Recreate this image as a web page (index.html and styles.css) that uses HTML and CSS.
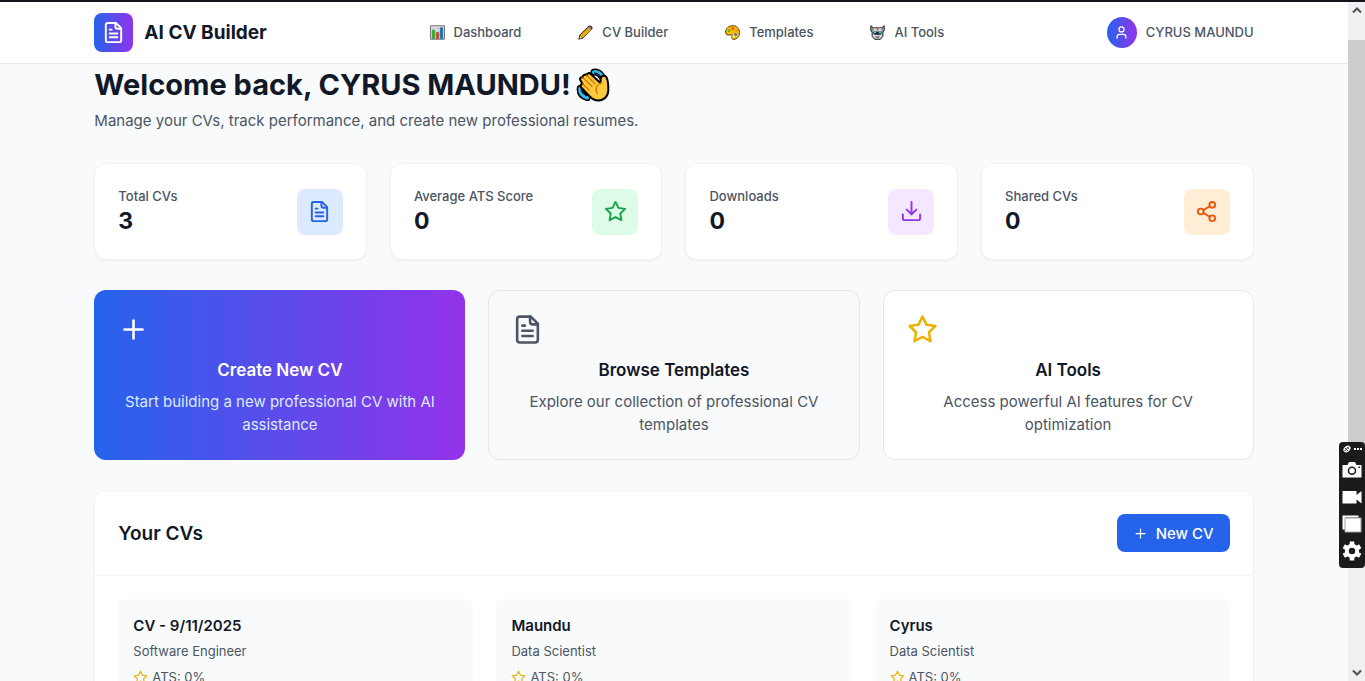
FILE: index.html
```html
<!DOCTYPE html>
<html lang="en">
<head>
<meta charset="utf-8">
<title>AI CV Builder</title>
<link rel="stylesheet" href="styles.css">
</head>
<body>
<svg class="sprite" aria-hidden="true">
  <symbol id="doc" viewBox="0 0 24 24"><path d="M14.5 2H6a2 2 0 0 0-2 2v16a2 2 0 0 0 2 2h12a2 2 0 0 0 2-2V7.5L14.5 2z"/><path d="M14 2v4a2 2 0 0 0 2 2h4M10 9H8M16 13H8M16 17H8"/></symbol>
  <symbol id="star" viewBox="0 0 24 24"><path d="M12 2l3.09 6.26L22 9.27l-5 4.87 1.18 6.88L12 17.77l-6.18 3.25L7 14.14 2 9.27l6.91-1.01L12 2z"/></symbol>
  <symbol id="download" viewBox="0 0 24 24"><path d="M21 15v4a2 2 0 0 1-2 2H5a2 2 0 0 1-2-2v-4M7 10l5 5 5-5M12 15V2"/></symbol>
  <symbol id="share" viewBox="0 0 24 24"><circle cx="18" cy="5" r="3"/><circle cx="6" cy="12" r="3"/><circle cx="18" cy="19" r="3"/><path d="M8.59 13.51l6.83 3.98M15.41 6.51l-6.82 3.98"/></symbol>
  <symbol id="plus" viewBox="0 0 24 24"><path d="M5 12h14M12 5v14"/></symbol>
  <symbol id="user" viewBox="0 0 24 24"><path d="M19 21v-2a4 4 0 0 0-4-4H9a4 4 0 0 0-4 4v2"/><circle cx="12" cy="7" r="4"/></symbol>
</svg>
<div class="window">
  <div class="page">
    <header class="topbar">
      <div class="container topbar-inner">
        <a class="brand" href="#"><span class="brand-mark"><svg class="icon icon-md"><use href="#doc"/></svg></span>AI CV Builder</a>
        <nav class="nav">
          <a href="#"><svg class="emoji" viewBox="0 0 16 16"><path fill="#d9dde0" stroke="#6b6f73" d="M.5.8h15v14.4H.5z"/><path stroke="#b3b8bc" stroke-width=".6" d="M1 4h14M1 7.500h14M1 11h14"/><path fill="#16c60c" stroke="#1a7a14" stroke-width=".5" d="M2.500 5.500h2.500V14.500H2.500z"/><path fill="#f03a17" stroke="#a02a18" stroke-width=".5" d="M6.800 8h2.500v6.500H6.800z"/><path fill="#0078d7" stroke="#0b4f8a" stroke-width=".5" d="M11 3h2.500v11.500H11z"/></svg>Dashboard</a>
          <a href="#"><svg class="emoji" viewBox="0 0 16 16"><path fill="#222" d="M.3 15.700l1.200-5L11.500.9Q13-.2 14.600 1.200q1.600 1.600.5 3L5.200 14.300z"/><path fill="#ffb900" d="M2.500 11L10.800 2.800l2.500 2.500L5 13.500z"/><path fill="#f7d7ac" d="M2.200 11.500l2.300 2.200-2.800.9z"/><path fill="#c4cbd0" d="M10.800 2.600l.8-.8 2.600 2.600-.8.800z"/><path fill="#e74856" d="M12 1.600q1-.8 2 .2t.3 2.200z"/><path stroke="#e08a00" stroke-width=".7" d="M3.600 12.400l8.400-8.300"/></svg>CV Builder</a>
          <a href="#"><svg class="emoji" viewBox="0 0 16 16"><path fill="#ffb900" stroke="#4b3710" d="M8 .7C12.500.5 15.500 3.800 15.500 8c0 4.300-3 7.200-6 7.300-2.800 0-2.600-2.100-2-3.300.6-1.400-.5-2-2-1.500C3 11.300.6 10.400.6 7.700.7 3.500 4 .9 8 .7z"/><circle cx="8.200" cy="3.700" r="1.300" fill="#f03a17"/><circle cx="4.500" cy="6" r="1.300" fill="#16c60c"/><circle cx="12.200" cy="6" r="1.100" fill="#e08a00"/><circle cx="11.300" cy="10" r="1.500" fill="#3b78ff"/><circle cx="9" cy="12.500" r="1.200" fill="#fff3c9"/></svg>Templates</a>
          <a href="#"><svg class="emoji" viewBox="0 0 16 16"><path fill="#8b9297" stroke="#222" d="M.8.8L3.700 3h8.600L15.200.8v5L13.800 8v4L11 15.300H5L2.200 12V8L.8 5.800z"/><path fill="#cfd4d8" d="M4 3.500h8l1 8.500-2.500 2.500h-5L3 12z"/><path fill="#1d1d1d" d="M3.500 7h9v2l-1.500 1.500H5L3.500 9z"/><path fill="#31d2f7" d="M4 7h2.600v1.800H4zM9.400 7H12v1.800H9.400z"/><path fill="#f03a17" d="M7.200 2.500h1.600v3H7.200z"/><path fill="#333" d="M6 12.300h4v1H6z"/></svg>AI Tools</a>
        </nav>
        <a class="account" href="#"><span class="avatar"><svg class="icon icon-sm"><use href="#user"/></svg></span>CYRUS MAUNDU</a>
      </div>
    </header>
    <main class="container">
      <h1>Welcome back, CYRUS MAUNDU! <svg class="wave" viewBox="0 0 34 34"><path fill="none" stroke="#000" stroke-width="7" stroke-linecap="round" d="M18 4.200q5-.8 8.500 5.200M4.200 20.500q-.5 7 7 9"/><path fill="none" stroke="#31b8ea" stroke-width="4" stroke-linecap="round" d="M18 4.200q5-.8 8.500 5.200M4.200 20.500q-.5 7 7 9"/><path fill="none" stroke="#000" stroke-width="1.200" d="M18 5q5 0 7.500 5.500M5.200 20q0 5 6 8"/><path fill="#ffc83d" stroke="#000" stroke-width="2" stroke-linejoin="round" d="M4.500 12.500c-1.500-2 .3-4 2.300-3C6.500 7 9 5.800 10.500 7.300c.3-2.300 3-2.800 4.300-1.300l9.500 9c.4-2.300.2-4.500 1-6 1-1.800 4-1.700 5 0 1.500 2.800 2.200 8 2 13.500-.2 6-4.500 10-10 10-4 0-6.300-1.700-8.300-3.700L5.200 19.500c-1.600-1.700-.2-3.800 1.600-3.300z"/><path fill="none" stroke="#d67d00" stroke-width="1.400" stroke-linecap="round" d="M6.800 9.500l9.200 9M10.500 7.300l8.500 8.500M6.800 16l6.500 6.200M24.300 15c-3.800 2.500-5.200 6.500-3 10.500"/></svg></h1>
      <p class="lead">Manage your CVs, track performance, and create new professional resumes.</p>

      <section class="stats">
        <article class="card stat"><div><p class="stat-label">Total CVs</p><p class="stat-value">3</p></div><span class="tile blue"><svg class="icon icon-md"><use href="#doc"/></svg></span></article>
        <article class="card stat"><div><p class="stat-label">Average ATS Score</p><p class="stat-value">0</p></div><span class="tile green"><svg class="icon icon-md"><use href="#star"/></svg></span></article>
        <article class="card stat"><div><p class="stat-label">Downloads</p><p class="stat-value">0</p></div><span class="tile purple"><svg class="icon icon-md"><use href="#download"/></svg></span></article>
        <article class="card stat"><div><p class="stat-label">Shared CVs</p><p class="stat-value">0</p></div><span class="tile orange"><svg class="icon icon-md"><use href="#share"/></svg></span></article>
      </section>

      <section class="actions">
        <button class="action primary" type="button"><svg class="icon icon-lg"><use href="#plus"/></svg><span class="action-title">Create New CV</span><span class="action-text">Start building a new professional CV with AI assistance</span></button>
        <button class="action plain" type="button"><svg class="icon icon-lg"><use href="#doc"/></svg><span class="action-title">Browse Templates</span><span class="action-text">Explore our collection of professional CV templates</span></button>
        <button class="action white" type="button"><svg class="icon icon-lg gold"><use href="#star"/></svg><span class="action-title">AI Tools</span><span class="action-text">Access powerful AI features for CV optimization</span></button>
      </section>

      <section class="card panel">
        <div class="panel-head">
          <h2>Your CVs</h2>
          <button class="new-cv" type="button"><svg class="icon icon-sm"><use href="#plus"/></svg>New CV</button>
        </div>
        <div class="cv-list">
          <article class="cv"><h3>CV - 9/11/2025</h3><p>Software Engineer</p><p class="ats"><svg class="icon icon-sm gold"><use href="#star"/></svg>ATS: 0%</p></article>
          <article class="cv"><h3>Maundu</h3><p>Data Scientist</p><p class="ats"><svg class="icon icon-sm gold"><use href="#star"/></svg>ATS: 0%</p></article>
          <article class="cv"><h3>Cyrus</h3><p>Data Scientist</p><p class="ats"><svg class="icon icon-sm gold"><use href="#star"/></svg>ATS: 0%</p></article>
        </div>
      </section>
    </main>
  </div>
  <div class="scrollbar" aria-hidden="true">
    <svg class="arrow" viewBox="0 0 10 8"><path d="M1 6.500l4-4 4 4"/></svg>
    <div class="track"><div class="thumb"></div></div>
    <svg class="arrow" viewBox="0 0 10 8"><path d="M1 1.500l4 4 4-4"/></svg>
  </div>
  <aside class="recorder">
    <svg class="grip" viewBox="0 0 20 8"><ellipse cx="5" cy="4" rx="4" ry="2.800" transform="rotate(-40 5 4)" fill="#fff"/><path stroke="#1b1b1b" stroke-width=".8" fill="none" d="M2 6.500l5-5M3 3l3 3M5 2l2 2"/><path fill="#fff" d="M12 3h2v2h-2zM15 3h2v2h-2zM18 3h2v2h-2z"/></svg>
    <button type="button" aria-label="Take screenshot"><svg viewBox="0 0 20 20"><path fill="#fff" d="M.5 5h5L7 2h6l1.500 3h5v12.500H.5z"/><circle cx="10" cy="10.800" r="3.500" fill="none" stroke="#1b1b1b" stroke-width="1.500"/><path fill="#1b1b1b" d="M16.500 6.500h1.500v1.500h-1.500z"/></svg></button>
    <button type="button" aria-label="Record video"><svg viewBox="0 0 20 20"><path fill="#fff" d="M.5 4h14v4l5-4v12.500l-5-4v4H.5z"/></svg></button>
    <button type="button" aria-label="Gallery"><svg viewBox="0 0 20 20"><path fill="#fff" d="M.5 1.500h16v2H3.500v12h-3z"/><path fill="#fff" stroke="#a5a5a5" d="M3 4h16v14H3z"/></svg></button>
    <button type="button" aria-label="Settings"><svg viewBox="0 0 20 20"><path fill="none" stroke="#fff" stroke-width="4.600" d="M10 .5v4M10 15.500v4M1.800 5.300l3.400 2M14.800 12.700l3.400 2M1.800 14.700l3.400-2M14.800 7.300l3.400-2"/><circle cx="10" cy="10" r="5.200" fill="none" stroke="#fff" stroke-width="4"/></svg></button>
  </aside>
</div>
</body>
</html>
```
FILE: styles.css
```css
* { box-sizing: border-box; }
body, h1, h2, h3, p { margin: 0; }
body {
  font-family: Inter, "Open Sans", sans-serif;
  font-size: 15px;
  line-height: 23px;
  color: #111827;
  background: #f9fafb;
}
a { color: inherit; text-decoration: none; }
button { font: inherit; color: inherit; border: 0; cursor: pointer; }
.sprite { position: absolute; width: 0; height: 0; }

.window {
  position: relative;
  display: flex;
  height: 100vh;
  border-top: 2px solid #15121c;
  overflow: hidden;
}
.page { flex: 1; overflow: hidden; }
.container { width: 86%; max-width: 1160px; margin: 0 auto; }

.icon {
  display: block;
  flex: none;
  fill: none;
  stroke: currentColor;
  stroke-width: 2;
  stroke-linecap: round;
  stroke-linejoin: round;
}
.icon-sm { width: 15px; height: 15px; }
.icon-md { width: 23px; height: 23px; }
.icon-lg { width: 31px; height: 31px; }
.gold { color: #eab308; }

.topbar { background: #fff; border-bottom: 1px solid #e5e7eb; }
.topbar-inner {
  display: flex;
  align-items: center;
  justify-content: space-between;
  height: 61px;
}
.brand { display: flex; align-items: center; gap: 11px; font-size: 19px; font-weight: 700; }
.brand-mark {
  display: grid;
  place-items: center;
  width: 39px;
  height: 39px;
  border-radius: 8px;
  color: #fff;
  background: linear-gradient(90deg, #2563eb, #9333ea);
}
.nav { display: flex; gap: 57px; }
.nav a { display: flex; align-items: center; gap: 9px; }
.nav, .account { font-size: 13px; font-weight: 500; color: #4b5563; }
.emoji { width: 15px; height: 15px; fill: none; }
.account { display: flex; align-items: center; gap: 9px; }
.avatar {
  display: grid;
  place-items: center;
  width: 30px;
  height: 31px;
  border-radius: 50%;
  color: #fff;
  background: linear-gradient(90deg, #2563eb, #9333ea);
}

main { padding-top: 3px; }
h1 { display: flex; align-items: center; gap: 5px; font-size: 29px; line-height: 35px; font-weight: 700; }
.wave { width: 34px; height: 34px; }
.lead { margin-top: 7px; color: #4b5563; }

.card {
  background: #fff;
  border: 1px solid #f3f4f6;
  border-radius: 12px;
  box-shadow: 0 1px 2px rgba(0, 0, 0, 0.06);
}
.stats { display: grid; grid-template-columns: repeat(4, 1fr); gap: 23px; margin-top: 31px; }
.stat { display: flex; align-items: center; justify-content: space-between; padding: 23px; }
.stat-label { font-size: 13px; line-height: 19px; font-weight: 500; color: #4b5563; }
.stat-value { font-size: 23px; line-height: 30px; font-weight: 700; }
.tile { display: grid; place-items: center; width: 46px; height: 46px; border-radius: 8px; }
.blue { color: #2563eb; background: #dbeafe; }
.green { color: #16a34a; background: #dcfce7; }
.purple { color: #9333ea; background: #f3e8ff; }
.orange { color: #ea580c; background: #ffedd5; }

.actions { display: grid; grid-template-columns: repeat(3, 1fr); gap: 23px; margin-top: 30px; }
.action {
  display: flex;
  flex-direction: column;
  align-items: center;
  padding: 23px;
  border: 1px solid #e5e7eb;
  border-radius: 12px;
}
.action .icon { align-self: flex-start; }
.action-title { margin: 12px 0 6px; font-size: 17px; line-height: 27px; font-weight: 600; }
.action-text { color: #4b5563; }
.primary { color: #fff; border-color: transparent; background: linear-gradient(90deg, #2563eb, #9333ea) border-box; }
.primary .action-text { color: #dbeafe; }
.plain { background: #f9fafb; }
.plain .icon { color: #4b5563; }
.white { background: #fff; }

.panel { margin-top: 30px; }
.panel-head {
  display: flex;
  align-items: center;
  justify-content: space-between;
  padding: 23px;
  border-bottom: 1px solid #f3f4f6;
}
h2 { font-size: 19px; font-weight: 600; }
.new-cv {
  display: flex;
  align-items: center;
  gap: 8px;
  height: 38px;
  padding: 0 16px;
  border-radius: 8px;
  font-weight: 500;
  color: #fff;
  background: #2563eb;
}
.cv-list { display: grid; grid-template-columns: repeat(3, 1fr); gap: 23px; padding: 23px; }
.cv { padding: 15px; border-radius: 8px; background: #f9fafb; }
h3 { font-size: 15px; font-weight: 600; }
.cv p { margin-top: 5px; font-size: 13px; line-height: 19px; color: #4b5563; }
.cv .ats { display: flex; align-items: center; gap: 4px; margin-top: 7px; }

.scrollbar {
  display: flex;
  flex: none;
  flex-direction: column;
  align-items: center;
  gap: 4px;
  width: 17px;
  padding: 4px 0;
  background: #f0f0f0;
}
.arrow { width: 10px; height: 8px; fill: none; stroke: #505050; stroke-width: 2; }
.track { flex: 1; width: 100%; padding-top: 22px; }
.thumb { height: 80%; background: #cdcdcd; }

.recorder {
  position: absolute;
  right: 0;
  top: 440px;
  display: flex;
  flex-direction: column;
  align-items: center;
  gap: 7px;
  width: 26px;
  padding: 3px 3px 7px;
  border-radius: 4px;
  background: #1b1b1b;
}
.recorder button { display: block; padding: 0; background: none; }
.recorder button svg { display: block; width: 20px; height: 20px; }
.grip { width: 20px; height: 8px; }
```
